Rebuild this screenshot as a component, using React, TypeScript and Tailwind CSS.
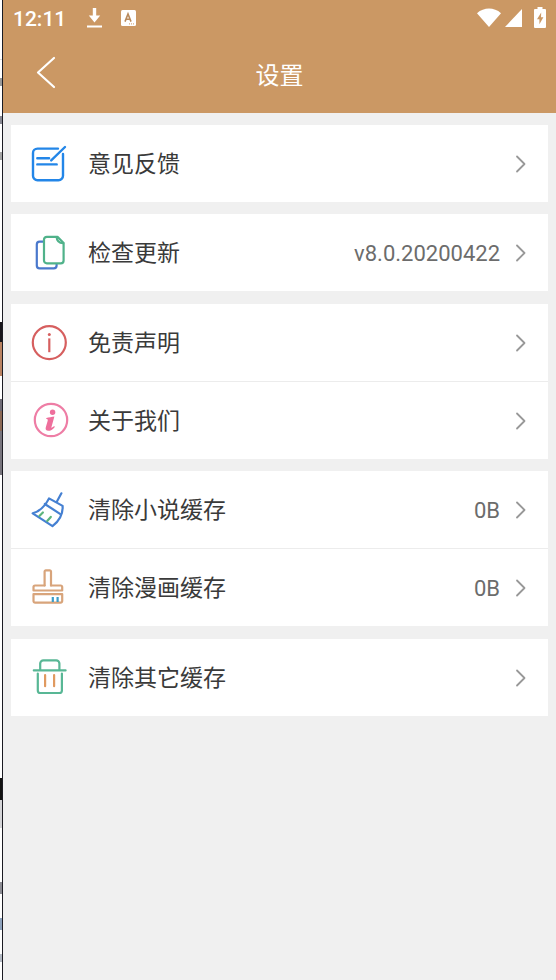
import type { ReactNode } from 'react'

interface SettingItem {
  label: string
  icon: ReactNode
  value?: string
}

function IconBox({ children }: { children: ReactNode }) {
  return (
    <svg
      className="w-[41px] h-[41px] shrink-0"
      viewBox="0 0 41 41"
      fill="none"
      strokeWidth="2.2"
      strokeLinecap="round"
      strokeLinejoin="round"
      aria-hidden="true"
    >
      {children}
    </svg>
  )
}

const feedbackIcon = (
  <IconBox>
    <g stroke="#2386e8" strokeWidth="2.4">
      <path d="M29 5.6H8.5a4.5 4.5 0 0 0-4.5 4.5v22.6a4.5 4.5 0 0 0 4.5 4.5h21a4.5 4.5 0 0 0 4.5-4.5V11" />
      <path d="M36 4 22.2 17.4M8.3 15.3h11.8M8.3 21.4h19.4" />
    </g>
  </IconBox>
)

const updateIcon = (
  <IconBox>
    <path stroke="#4a78cc" d="M14 9.6h-3.4a2.8 2.8 0 0 0-2.8 2.8v21.2a2.8 2.8 0 0 0 2.8 2.8h14.2a2.8 2.8 0 0 0 2.8-2.8v-1" />
    <path stroke="#50b28a" d="M17.8 4.8h10.7l6.1 6.2v17.6a2.8 2.8 0 0 1-2.8 2.8h-14a2.8 2.8 0 0 1-2.8-2.8v-21a2.8 2.8 0 0 1 2.8-2.8z" />
    <path stroke="#50b28a" d="M27.6 5c.2 3.9 2.3 6 6.6 6.2" />
  </IconBox>
)

const disclaimerIcon = (
  <IconBox>
    <circle cx="20.3" cy="20.6" r="16.5" stroke="#d65f5f" />
    <circle cx="20.3" cy="12.4" r="1.5" fill="#d65f5f" />
    <path stroke="#d65f5f" strokeLinecap="butt" d="M20.3 16.4v13.8" />
  </IconBox>
)

const aboutIcon = (
  <IconBox>
    <circle cx="22" cy="20" r="16.2" stroke="#ee7da5" />
    <circle cx="23.6" cy="12.2" r="2.7" fill="#ee6f9c" />
    <path
      fill="#ee6f9c"
      d="M17.4 17.9c2.4-.2 5.2-.9 8-1.3l-3 10.6c-.2.9.5.8 2.8-1.1l.6.8c-2 2.6-4.4 3.9-6.5 3.9-2.3 0-3.1-1.5-2.5-3.5l1.9-6.6c.3-1.2-.1-1.5-1.5-1.6z"
    />
  </IconBox>
)

const novelCacheIcon = (
  <IconBox>
    <g stroke="#4580d2">
      <path d="M32.4 4.3l-4.6 8.4M20 9.4l13.6 7.5c.5 7.8-3.4 15.1-10.1 20.3L3.7 24.4C11.2 22.2 16.2 17 20 9.4z" />
      <path d="M15.8 15 31 24.8" />
    </g>
    <path stroke="#5db57c" d="M10.4 27l3.5-3.5M18.2 32l3.6-4.1" />
  </IconBox>
)

const comicCacheIcon = (
  <IconBox>
    <g stroke="#d8a47b">
      <path d="M15.6 18.4V4.6a1.2 1.2 0 0 1 1.2-1.2h4.1A1.2 1.2 0 0 1 22 4.6v13.8" />
      <path d="M15.6 18.5H6a1.5 1.5 0 0 0-1.5 1.5v3.5h28.7V20a1.5 1.5 0 0 0-1.5-1.5H22" />
      <path d="M4.5 27.1h28.7v7a1.6 1.6 0 0 1-1.6 1.6H6.1a1.6 1.6 0 0 1-1.6-1.6z" />
    </g>
    <path stroke="#3c9cc8" strokeLinecap="butt" d="M23.8 30v5M28.6 30v5" />
  </IconBox>
)

const otherCacheIcon = (
  <IconBox>
    <g stroke="#58b795">
      <path d="M11.2 13V6.6A3.2 3.2 0 0 1 14.4 3.4h12.8a3.2 3.2 0 0 1 3.2 3.2V13" />
      <path d="M4.8 13.4h31.8M8.8 16.6v16.8a2.6 2.6 0 0 0 2.6 2.6h18.9a2.6 2.6 0 0 0 2.6-2.6V16.6" />
    </g>
    <path stroke="#e09a60" d="M16.1 18v11.2M25.1 18v11.2" />
  </IconBox>
)

const groups: SettingItem[][] = [
  [{ label: '意见反馈', icon: feedbackIcon }],
  [{ label: '检查更新', icon: updateIcon, value: 'v8.0.20200422' }],
  [
    { label: '免责声明', icon: disclaimerIcon },
    { label: '关于我们', icon: aboutIcon },
  ],
  [
    { label: '清除小说缓存', icon: novelCacheIcon, value: '0B' },
    { label: '清除漫画缓存', icon: comicCacheIcon, value: '0B' },
  ],
  [{ label: '清除其它缓存', icon: otherCacheIcon }],
]

function StatusBar() {
  return (
    <div className="h-9 px-[10px] flex items-center text-white">
      <span className="pt-0.5 text-[21px] leading-8 font-medium">12:11</span>
      <svg className="ml-5 w-[17px] h-5" viewBox="0 0 17 20" fill="currentColor" aria-hidden="true">
        <path d="M6.8 0h3.4v7.5h4L8.5 14.5l-5.7-7h4zM1 17.4h15v2H1z" />
      </svg>
      <svg className="ml-[18px] w-[15px] h-4" viewBox="0 0 15 16" aria-hidden="true">
        <rect width="15" height="16" rx="1.5" fill="#fff" />
        <path d="M4 11.6 7 4l3 7.6M5 9.3h4" fill="none" stroke="#b98a5c" strokeWidth="1.6" />
        <path d="M8 13.9h5" stroke="#cb9864" strokeWidth="1" strokeDasharray="1 1" />
      </svg>
      <div className="ml-auto flex items-center">
        <svg className="w-6 h-5" viewBox="0 0 24 20" fill="currentColor" aria-hidden="true">
          <path d="M0 5.2C7-1 17-1 24 5.2L12 19z" />
        </svg>
        <svg className="ml-1 w-[17px] h-[18px]" viewBox="0 0 17 18" fill="currentColor" aria-hidden="true">
          <path d="M17 0v18H0z" />
        </svg>
        <svg className="ml-3 mb-0.5 w-3 h-[21px]" viewBox="0 0 12 21" aria-hidden="true">
          <path d="M3.5 0h5v2H11a1 1 0 0 1 1 1v17a1 1 0 0 1-1 1H1a1 1 0 0 1-1-1V3a1 1 0 0 1 1-1h2.5z" fill="#fff" />
          <path d="M7.2 5.5 3 12.2h2.4v5l4-6.9H7z" fill="#cb9864" />
        </svg>
      </div>
    </div>
  )
}

function Header() {
  return (
    <header className="bg-[#cb9864]">
      <StatusBar />
      <div className="h-[77px] grid grid-cols-[80px_1fr_80px] items-center text-white">
        <button type="button" aria-label="返回" className="h-full pl-8 pb-1.5 flex items-center">
          <svg
            className="w-[22px] h-[34px]"
            viewBox="0 0 22 34"
            fill="none"
            stroke="currentColor"
            strokeWidth="2.2"
            strokeLinecap="round"
            strokeLinejoin="round"
          >
            <path d="M19 3 3 17.5 19 32" />
          </svg>
        </button>
        <h1 className="pt-0.5 text-center text-2xl font-normal">设置</h1>
      </div>
    </header>
  )
}

function SettingRow({ label, icon, value }: SettingItem) {
  return (
    <button type="button" className="w-full h-[77px] pl-[18px] pr-[21px] flex items-center text-left">
      {icon}
      <span className="ml-[18px] pt-0.5 text-[23px] leading-8 text-[#3a3a3a]">{label}</span>
      <span className="ml-auto pt-0.5 text-[22px] leading-8 text-[#6c6c6c]">{value}</span>
      <svg
        className="ml-[15px] w-3 h-5 shrink-0"
        viewBox="0 0 12 20"
        fill="none"
        stroke="#989898"
        strokeWidth="1.8"
        strokeLinecap="round"
        strokeLinejoin="round"
        aria-hidden="true"
      >
        <path d="M2 2.5 9.5 10 2 17.5" />
      </svg>
    </button>
  )
}

// Sliver of the page underneath, visible at the left edge
function PageEdge() {
  return (
    <div className="w-[3px] shrink-0 bg-white border-r border-[#1b1b22]" aria-hidden="true">
      <div className="mt-[59px] h-px bg-[#dddddd]" />
      <div className="mt-[18px] h-2 bg-[#9a9a9a]" />
      <div className="mt-[30px] h-2 bg-[#8a8a94]" />
      <div className="mt-7 h-2 bg-[#a5a5a5]" />
      <div className="mt-[162px] h-5 bg-[#17151a]" />
      <div className="h-[34px] bg-[#b98261]" />
      <div className="mt-[23px] h-3 bg-[#6e6a74]" />
      <div className="h-5 bg-[#8b6955]" />
      <div className="h-11 bg-[#77747c]" />
      <div className="mt-[303px] h-[22px] bg-[#111111]" />
      <div className="h-7 bg-[#d5d5d8]" />
      <div className="mt-[54px] h-3 bg-[#8d8d94]" />
      <div className="mt-6 h-3 bg-[#8fa3bd]" />
      <div className="mt-6 h-2 bg-[#b4bac4]" />
    </div>
  )
}

export default function App() {
  return (
    <div className="min-h-screen flex bg-[#f0f0f0] font-[Roboto,'Noto_Sans_CJK_SC',sans-serif]">
      <PageEdge />
      <div className="flex-1 min-w-0">
        <Header />
        <main className="px-2 pt-3">
          {groups.map((items) => (
            <section key={items[0].label} className="bg-white divide-y divide-[#ececec] odd:mb-3 even:mb-[13px]">
              {items.map((item) => (
                <div key={item.label}>
                  <SettingRow {...item} />
                </div>
              ))}
            </section>
          ))}
        </main>
      </div>
    </div>
  )
}
